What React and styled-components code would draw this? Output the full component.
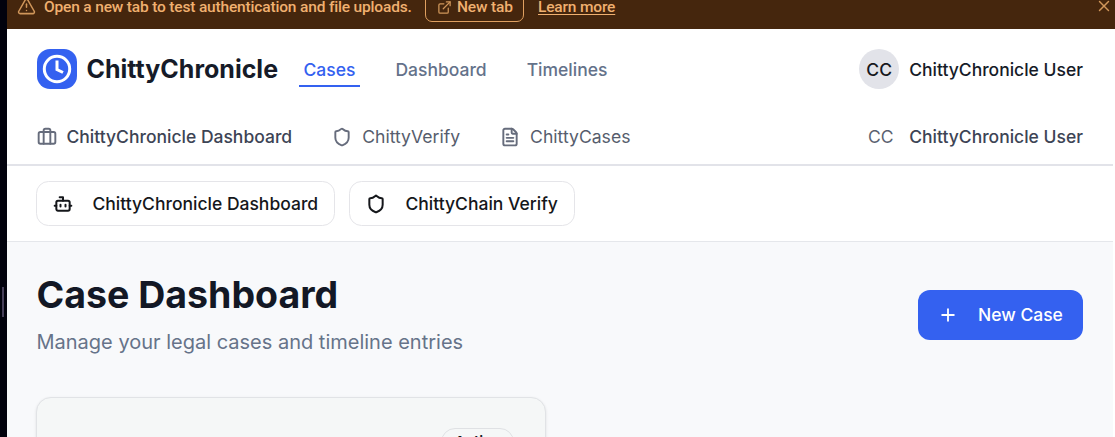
import React from 'react';
import styled, { createGlobalStyle } from 'styled-components';
import { TriangleAlert, ExternalLink, X, Briefcase, Shield, FileText, Bot, Plus } from 'lucide-react';

const GlobalStyle = createGlobalStyle`
  * { box-sizing: border-box; }
  body { margin: 0; overflow: hidden; background: #fff; font-family: Inter, sans-serif; }
  a { color: inherit; }
`;

const Shell = styled.div`
  display: flex;
  height: 437px;
  overflow: hidden;
`;

const Gutter = styled.div`
  flex: 0 0 7px;
  background: #02020d;
  padding: 287px 0 0 2px;
`;

const Handle = styled.div`
  width: 2px;
  height: 30px;
  background: #47405a;
`;

const Pane = styled.div`
  flex: 1;
  min-width: 0;
`;

const Banner = styled.div`
  height: 29px;
  background: #45260d;
  color: #f0b070;
  display: flex;
  align-items: flex-start;
  padding: 0 2px 0 10px;
  font: 500 15.5px/14px Roboto, sans-serif;
  letter-spacing: -0.17px;
  white-space: nowrap;
  svg { flex: none; color: #d0965a; }
  > svg { margin-top: -3px; }
`;

const BannerText = styled.span`
  width: 367px;
  margin: 0 14px 0 8px;
`;

const TabButton = styled.button`
  display: flex;
  align-items: center;
  gap: 5px;
  width: 99px;
  height: 34px;
  margin-top: -12px;
  padding: 4px 0 0 11px;
  border: 1px solid #e0a060;
  border-radius: 7px;
  background: none;
  color: inherit;
  font: inherit;
  letter-spacing: inherit;
`;

const LearnMore = styled.a`
  margin: 0 auto 0 14px;
  text-underline-offset: 2px;
  text-decoration: underline;
`;

const Page = styled.main`
  width: 1106px;
  background: #fff;
`;

const Header = styled.header`
  height: 137px;
  border-bottom: 2px solid #e2e3e9;
`;

const TopRow = styled.div`
  height: 80px;
  padding: 0 30px 0 29.5px;
  display: flex;
  align-items: center;
`;

const Logo = styled.div`
  width: 40px;
  height: 40px;
  border-radius: 13px;
  background: #3461f0;
  display: grid;
  place-items: center;
`;

const Brand = styled.div`
  width: 202px;
  padding-left: 10px;
  font-size: 25px;
  font-weight: 700;
  color: #161b28;
  white-space: nowrap;
`;

const Tabs = styled.nav`
  display: flex;
  gap: 30px;
  margin-left: 20px;
`;

const Tab = styled.a`
  height: 36px;
  padding: 0 5px;
  border-bottom: 2px solid ${p => (p.$active ? '#3461f0' : 'transparent')};
  color: ${p => (p.$active ? '#3461f0' : '#64728a')};
  font-size: 17.5px;
  font-weight: 500;
  line-height: 37px;
`;

const User = styled.div`
  display: flex;
  align-items: center;
  gap: 10px;
  margin-left: auto;
  color: ${p => (p.$muted ? '#3d4455' : '#161b28')};
  font-size: 17.5px;
  font-weight: 500;
  white-space: nowrap;
`;

const Avatar = styled.span`
  width: ${p => (p.$plain ? '37px' : '40px')};
  height: 40px;
  border-radius: 50%;
  background: ${p => (p.$plain ? 'none' : '#e2e3e9')};
  color: ${p => (p.$plain ? '#5b6270' : '#16181d')};
  font-weight: ${p => (p.$plain ? 400 : 500)};
  display: grid;
  place-items: center;
`;

const LinkRow = styled.div`
  height: 55px;
  padding: 0 30px 0 29.5px;
  display: flex;
  align-items: center;
  gap: 40px;
`;

const IconLink = styled.a`
  display: flex;
  align-items: center;
  gap: 10px;
  color: ${p => (p.$strong ? '#3d4455' : '#565d6d')};
  font-size: ${p => (p.$strong ? 17.5 : 17.6)}px;
  font-weight: ${p => (p.$strong ? 500 : 400)};
  white-space: nowrap;
  svg { color: #666c7c; }
`;

const Apps = styled.div`
  height: 76px;
  padding: 15px 29px;
  border-bottom: 1px solid #e5e7eb;
  display: flex;
  gap: 14px;
`;

const AppButton = styled.button`
  width: ${p => p.$width}px;
  height: 45px;
  padding: 0 0 0 15.5px;
  display: flex;
  align-items: center;
  gap: 20px;
  border: 1px solid #e5e5e9;
  border-radius: 12.5px;
  background: #fff;
  color: #15171b;
  font: 500 17.5px Inter, sans-serif;
  white-space: nowrap;
`;

const Content = styled.section`
  height: 195px;
  background: #f8f9fb;
  padding: 30px 30px 0 29px;
`;

const Heading = styled.div`
  display: flex;
  justify-content: space-between;
  height: 125px;
  padding-left: 0.5px;
`;

const Title = styled.h1`
  margin: 0;
  font-size: 37.5px;
  line-height: 45px;
  font-weight: 700;
  color: #131825;
`;

const Subtitle = styled.p`
  margin: 10px 0 0;
  font-size: 20px;
  line-height: 30px;
  color: #667389;
`;

const NewCase = styled.button`
  width: 165px;
  height: 50px;
  margin-top: 18px;
  padding: 0 0 1px 20px;
  display: flex;
  align-items: center;
  gap: 20px;
  border: 0;
  border-radius: 12px;
  background: #3461f0;
  color: #fff;
  font: 500 17.5px Inter, sans-serif;
`;

const Card = styled.article`
  width: 510px;
  height: 160px;
  padding: 30px 31px;
  border: 1px solid #e1e3e6;
  border-radius: 15px;
  background: #f5f7f7;
  box-shadow: 0 1px 3px rgba(0, 0, 0, 0.1);
  display: flex;
  justify-content: flex-end;
`;

const Status = styled.span`
  width: 73px;
  height: 28px;
  border: 1px solid #dfe1e4;
  border-radius: 14px;
  color: #15171b;
  font-size: 15px;
  font-weight: 600;
  line-height: 26px;
  text-align: center;
`;

export default function App() {
  return (
    <>
      <GlobalStyle />
      <Shell>
        <Gutter><Handle /></Gutter>
        <Pane>
          <Banner>
            <TriangleAlert size={19} strokeWidth={1.9} />
            <BannerText>Open a new tab to test authentication and file uploads.</BannerText>
            <TabButton><ExternalLink size={15} strokeWidth={2} />New tab</TabButton>
            <LearnMore>Learn more</LearnMore>
            <X size={18} strokeWidth={1.9} />
          </Banner>
          <Page>
            <Header>
              <TopRow>
                <Logo>
                  <svg width="30" height="30" viewBox="0 0 30 30" fill="none" stroke="#fff" strokeWidth="3">
                    <circle cx="15" cy="15" r="12.7" />
                    <path d="M15 6.5v9l6 3" />
                  </svg>
                </Logo>
                <Brand>ChittyChronicle</Brand>
                <Tabs>
                  <Tab $active>Cases</Tab>
                  <Tab>Dashboard</Tab>
                  <Tab>Timelines</Tab>
                </Tabs>
                <User><Avatar>CC</Avatar>ChittyChronicle User</User>
              </TopRow>
              <LinkRow>
                <IconLink $strong><Briefcase size={20} strokeWidth={2.3} />ChittyChronicle Dashboard</IconLink>
                <IconLink><Shield size={20} strokeWidth={2.3} />ChittyVerify</IconLink>
                <IconLink><FileText size={20} strokeWidth={2.3} />ChittyCases</IconLink>
                <User $muted><Avatar $plain>CC</Avatar>ChittyChronicle User</User>
              </LinkRow>
            </Header>
            <Apps>
              <AppButton $width={299}><Bot size={20} strokeWidth={2.4} />ChittyChronicle Dashboard</AppButton>
              <AppButton $width={226}><Shield size={20} strokeWidth={2.4} />ChittyChain Verify</AppButton>
            </Apps>
            <Content>
              <Heading>
                <div>
                  <Title>Case Dashboard</Title>
                  <Subtitle>Manage your legal cases and timeline entries</Subtitle>
                </div>
                <NewCase><Plus size={20} strokeWidth={2.2} />New Case</NewCase>
              </Heading>
              <Card><Status>Active</Status></Card>
            </Content>
          </Page>
        </Pane>
      </Shell>
    </>
  );
}
